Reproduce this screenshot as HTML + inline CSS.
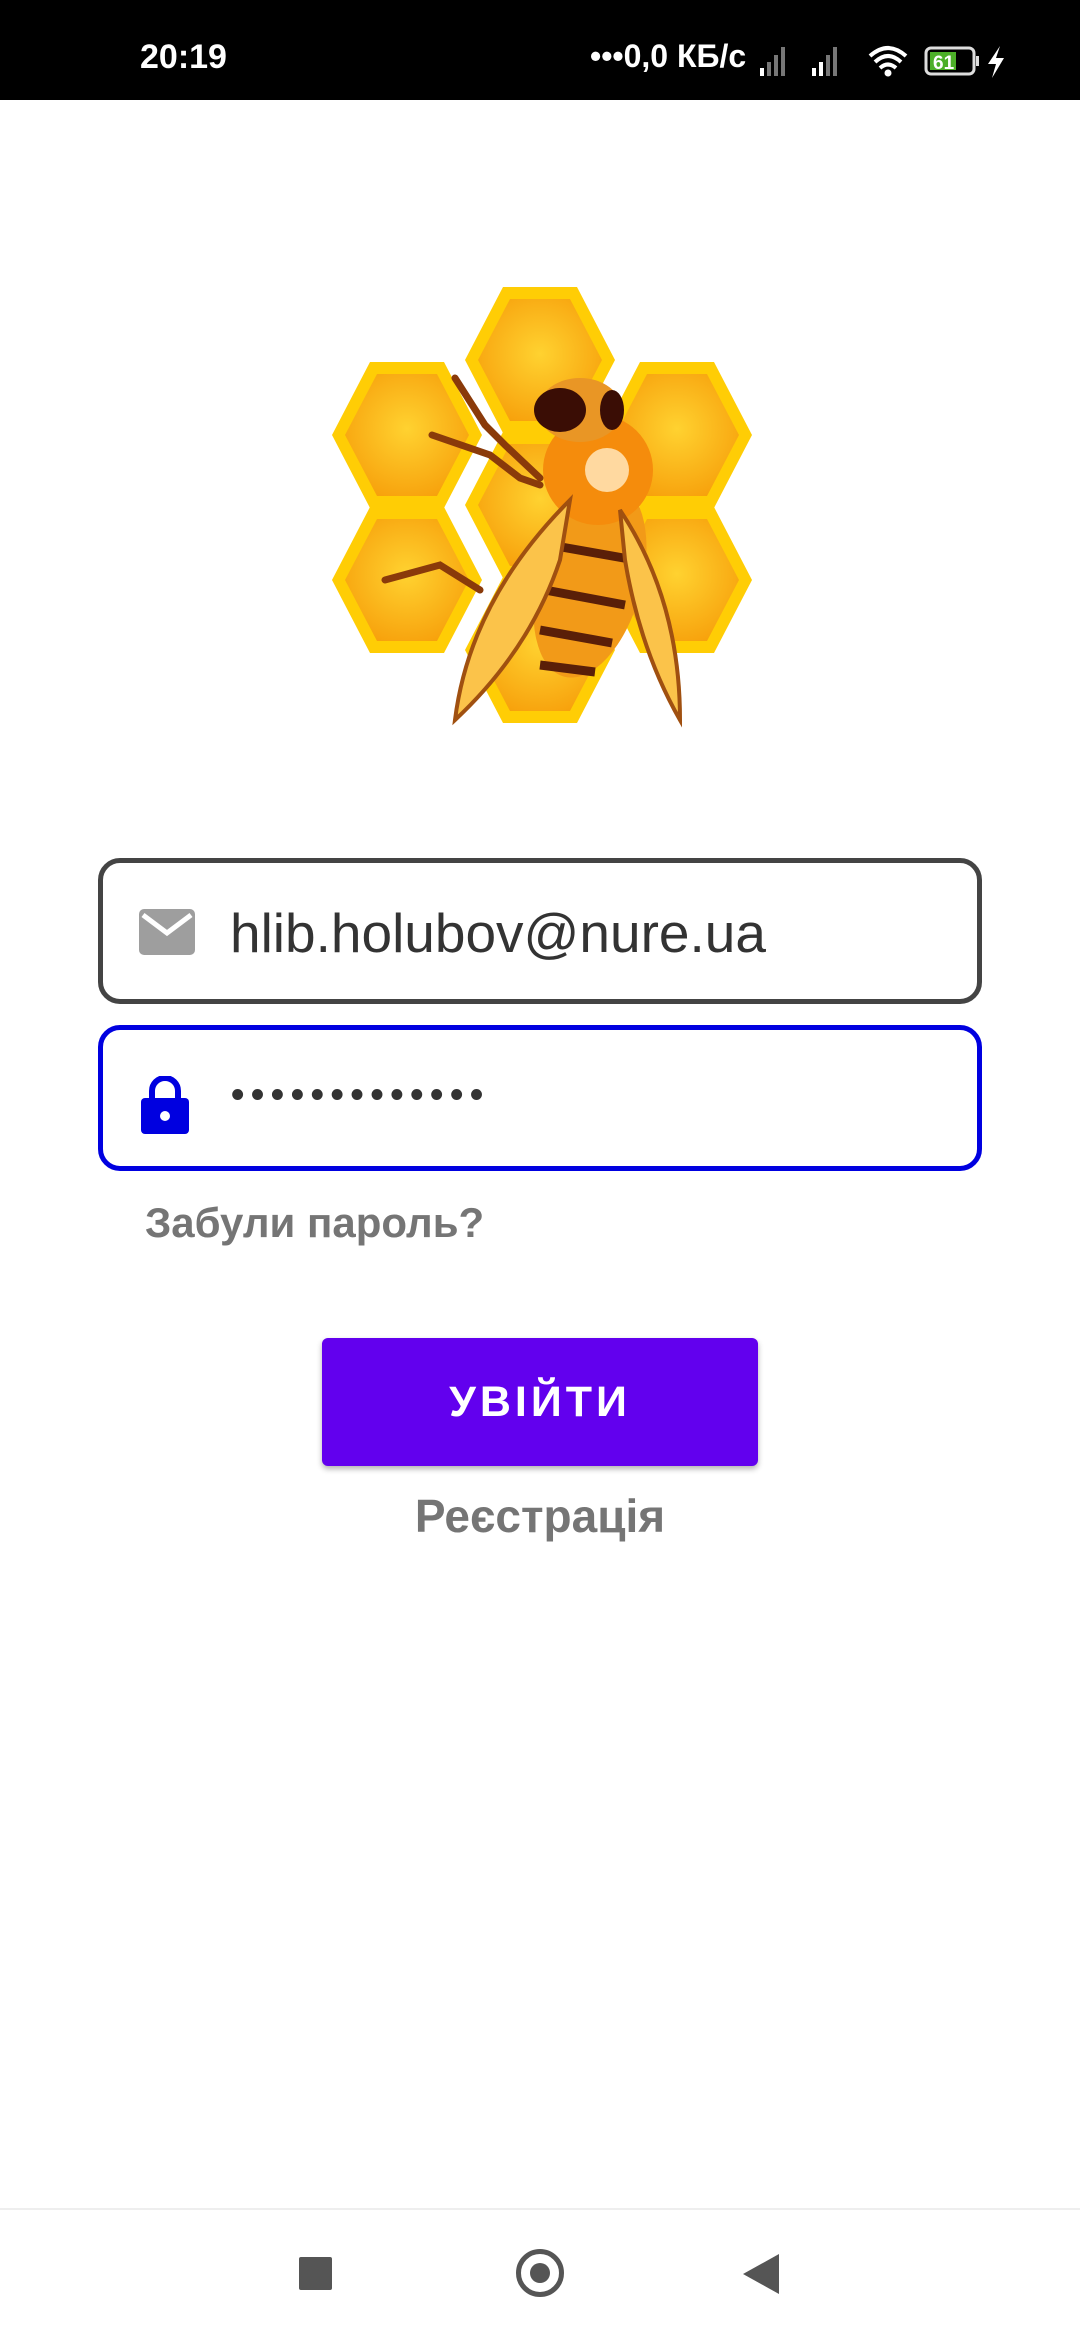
<!DOCTYPE html>
<html><head><meta charset="utf-8"><style>
*{margin:0;padding:0;box-sizing:border-box}
body{width:1080px;height:2340px;background:#fff;position:relative;overflow:hidden;font-family:"Liberation Sans","DejaVu Sans",sans-serif}
.sb{position:absolute;left:0;top:0;width:1080px;height:100px;background:#000;color:#fff}
.field{position:absolute;left:98px;width:884px;height:146px;border-radius:22px;border:5px solid #444}
.txt{position:absolute;font-size:56px;color:#333}
</style></head><body>
<div class="sb">
<div style="position:absolute;left:140px;top:38px;font-size:34px;font-weight:bold">20:19</div>
<div style="position:absolute;left:590px;top:38px;font-size:32px;font-weight:bold">•••0,0 КБ/с</div>
<svg style="position:absolute;left:760px;top:42px" width="300" height="40" viewBox="0 0 300 40">
<g fill="#777"><rect x="0" y="26" width="4" height="8" fill="#fff"/><rect x="7" y="20" width="4" height="14"/><rect x="14" y="13" width="4" height="21"/><rect x="21" y="5" width="4" height="29"/>
<rect x="52" y="26" width="4" height="8" fill="#fff"/><rect x="59" y="20" width="4" height="14" fill="#fff"/><rect x="66" y="13" width="4" height="21"/><rect x="73" y="5" width="4" height="29"/></g>
<path d="M110 14 Q128 -2 146 14 M115 20 Q128 8 141 20 M120 26 Q128 19 136 26" stroke="#fff" stroke-width="4" fill="none"/><circle cx="128" cy="31" r="3.5" fill="#fff"/>
<rect x="166" y="6" width="48" height="26" rx="5" fill="none" stroke="#ddd" stroke-width="3"/><rect x="170" y="10" width="26" height="18" fill="#4caf28"/>
<text x="173" y="27" font-size="19" font-weight="bold" fill="#fff" font-family="Liberation Sans">61</text>
<rect x="216" y="14" width="3" height="10" fill="#ddd"/>
<path d="M240 4 L228 22 L236 22 L232 36 L244 16 L236 16 Z" fill="#fff"/></svg>
</div>

<svg style="position:absolute;left:320px;top:270px" width="440" height="470" viewBox="320 270 440 470">
<defs><radialGradient id="g" cx="50%" cy="45%" r="60%"><stop offset="0" stop-color="#ffd230"/><stop offset="1" stop-color="#f7a10c"/></radialGradient>
<symbol id="h" viewBox="-75 -73 150 146" overflow="visible"><polygon points="-75,0 -37,-73 37,-73 75,0 37,73 -37,73" fill="#ffcd05"/><polygon points="-62,0 -30,-61 30,-61 62,0 30,61 -30,61" fill="url(#g)"/></symbol></defs>
<use href="#h" x="332" y="362" width="150" height="146"/>
<use href="#h" x="465" y="287" width="150" height="146"/>
<use href="#h" x="602" y="362" width="150" height="146"/>
<use href="#h" x="332" y="507" width="150" height="146"/>
<use href="#h" x="465" y="432" width="150" height="146"/>
<use href="#h" x="602" y="507" width="150" height="146"/>
<use href="#h" x="465" y="577" width="150" height="146"/>
<g stroke="#8a3a0a" stroke-width="7" fill="none" stroke-linecap="round"><path d="M455 378 L485 425 L505 445 L540 478"/><path d="M432 435 L490 455 L520 478 L540 485"/><path d="M385 580 L440 565 L480 590"/></g>
<ellipse cx="590" cy="580" rx="52" ry="100" fill="#f29a18" transform="rotate(15 590 580)"/>
<g stroke="#5a1f08" stroke-width="9"><path d="M550 545 L635 560"/><path d="M545 590 L625 605"/><path d="M540 630 L612 643"/><path d="M540 665 L595 672"/></g>
<circle cx="598" cy="470" r="55" fill="#f58c0c"/><circle cx="607" cy="470" r="22" fill="#ffd9a0"/>
<ellipse cx="580" cy="410" rx="42" ry="32" fill="#e99625"/>
<ellipse cx="560" cy="410" rx="26" ry="22" fill="#3a0d05"/><ellipse cx="612" cy="410" rx="12" ry="20" fill="#3a0d05"/>
<path d="M570 500 Q470 600 455 720 Q530 650 560 560 Z" fill="#fbc34a" stroke="#a05010" stroke-width="4"/>
<path d="M620 510 Q680 600 680 720 Q640 650 625 560 Z" fill="#fbc34a" stroke="#a05010" stroke-width="4"/>
</svg>

<div class="field" style="top:858px;border-color:#444">
<svg style="position:absolute;left:36px;top:46px" width="56" height="46" viewBox="0 0 56 46"><rect width="56" height="46" rx="5" fill="#9e9e9e"/><path d="M4 6 L28 24 L52 6" stroke="#fff" stroke-width="5" fill="none"/></svg>
<div class="txt" style="left:127px;top:38px;font-size:55px">hlib.holubov@nure.ua</div>
</div>
<div class="field" style="top:1025px;border-color:#0000e0">
<svg style="position:absolute;left:38px;top:46px" width="48" height="58" viewBox="0 0 48 58"><path d="M11 24 V15 a13 13 0 0 1 26 0 V24" stroke="#0000e0" stroke-width="6" fill="none"/><rect x="0" y="22" width="48" height="36" rx="4" fill="#0000e0"/><circle cx="24" cy="40" r="5" fill="#fff"/></svg>
<div class="txt" style="left:128px;top:44px;font-size:38px;letter-spacing:6.6px;font-weight:bold">•••••••••••••</div>
</div>
<div style="position:absolute;left:145px;top:1199px;font-size:42px;font-weight:bold;color:#757575">Забули пароль?</div>
<div style="position:absolute;left:322px;top:1338px;width:436px;height:128px;background:#6200ee;border-radius:6px;box-shadow:0 3px 6px rgba(0,0,0,.3);color:#fff;font-size:43px;font-weight:bold;letter-spacing:4px;text-align:center;line-height:128px">УВІЙТИ</div>
<div style="position:absolute;left:0;width:1080px;top:1489px;text-align:center;font-size:46px;font-weight:bold;color:#757575">Реєстрація</div>

<div style="position:absolute;left:0;top:2208px;width:1080px;height:2px;background:#eee"></div>
<div style="position:absolute;left:299px;top:2257px;width:33px;height:33px;background:#555;border-radius:2px"></div>
<div style="position:absolute;left:516px;top:2249px;width:48px;height:48px;border:5px solid #555;border-radius:50%"></div>
<div style="position:absolute;left:530px;top:2263px;width:20px;height:20px;background:#555;border-radius:50%"></div>
<svg style="position:absolute;left:743px;top:2254px" width="36" height="40"><path d="M36 0 L36 40 L0 20 Z" fill="#555"/></svg>
</body></html>
